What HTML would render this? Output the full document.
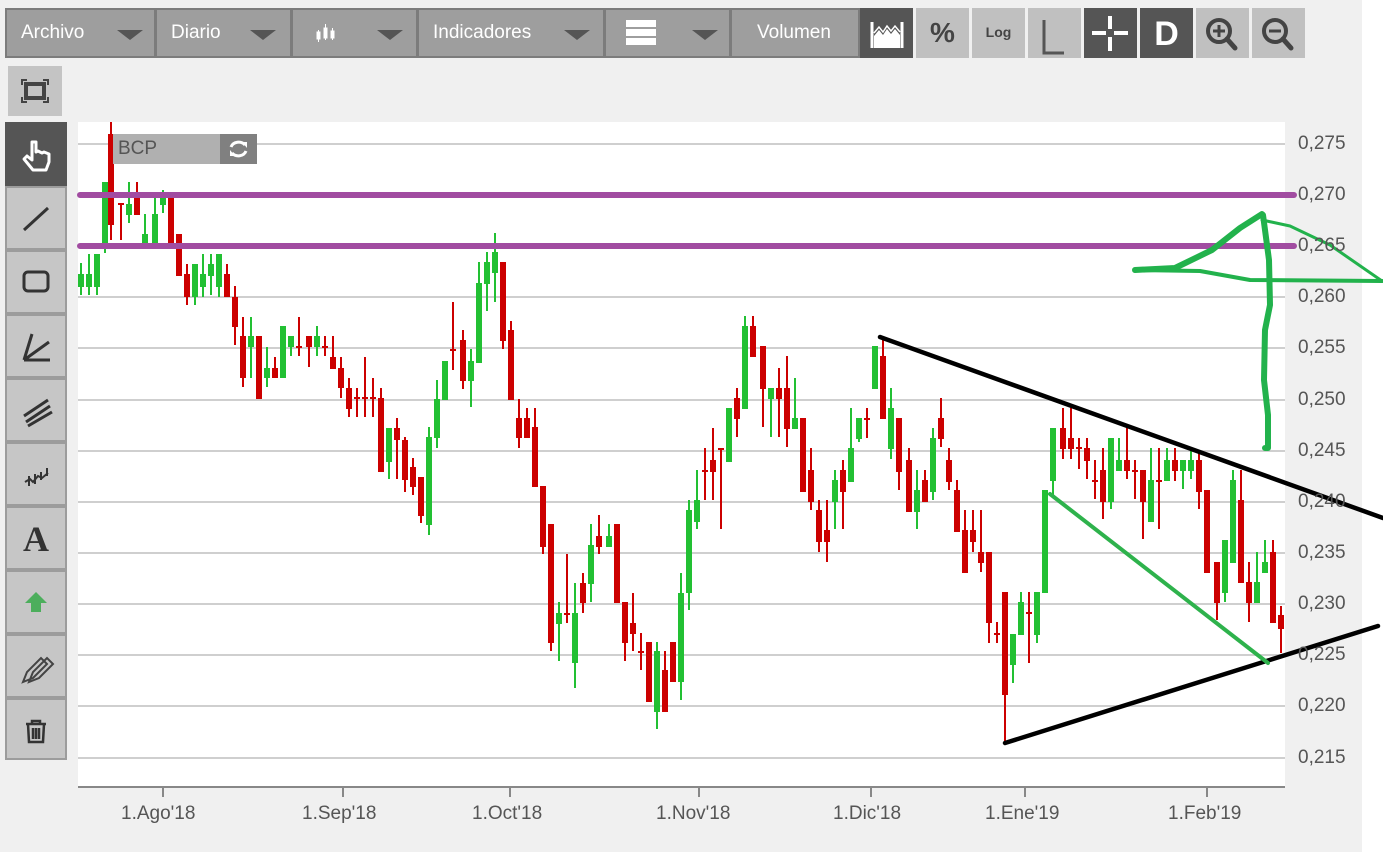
<!DOCTYPE html>
<html><head><meta charset="utf-8"><style>
body{margin:0;width:1383px;height:852px;background:#f0f0f0;font-family:"Liberation Sans",Arial,sans-serif;position:relative;overflow:hidden}
.tb{position:absolute;top:8px;height:50px;background:#9e9e9e;border:2px solid #7c7c7c;box-sizing:border-box;color:#fff;font-size:19px;line-height:46px}
.tb span{position:absolute;left:14px}
.tri{position:absolute;top:20px;width:0;height:0;border-left:13px solid transparent;border-right:13px solid transparent;border-top:10px solid #555}
.ib{position:absolute;top:8px;width:53px;height:50px;background:#c0c0c0}
.ib.d{background:#555}
.lb{position:absolute;left:5px;width:62px;height:64px;background:#c6c6c6;border:2px solid #9c9c9c;box-sizing:border-box}
.ax{position:absolute;left:1298px;font-size:19px;color:#555}
.xl{position:absolute;top:803px;font-size:19px;color:#555}
</style></head><body>
<div class="tb" style="left:5px;width:151px"><span>Archivo</span><div class="tri" style="left:110px"></div></div>
<div class="tb" style="left:155px;width:137px"><span>Diario</span><div class="tri" style="left:93px"></div></div>
<div class="tb" style="left:291px;width:127px"><svg style="position:absolute;left:22px;top:12px" width="28" height="24"><g fill="#fff" stroke="#fff"><rect x="2" y="10" width="3" height="7"/><line x1="3.5" y1="8" x2="3.5" y2="20"/><rect x="9" y="6" width="3" height="10"/><line x1="10.5" y1="2" x2="10.5" y2="18"/><rect x="16" y="9" width="3" height="7"/><line x1="17.5" y1="6" x2="17.5" y2="18"/></g></svg><div class="tri" style="left:84px"></div></div>
<div class="tb" style="left:417px;width:188px"><span>Indicadores</span><div class="tri" style="left:145px"></div></div>
<div class="tb" style="left:604px;width:127px"><svg style="position:absolute;left:20px;top:10px" width="32" height="28"><rect x="0" y="0" width="30" height="7" fill="#fff"/><rect x="0" y="9" width="30" height="7" fill="#fff"/><rect x="0" y="18" width="30" height="7" fill="#fff"/></svg><div class="tri" style="left:86px"></div></div>
<div class="tb" style="left:730px;width:130px"><span style="left:25px">Volumen</span></div>
<div class="ib d" style="left:860px"><svg width="53" height="50"><g stroke="#fff" stroke-width="3" fill="none"><line x1="12" y1="14" x2="12" y2="40"/><line x1="42" y1="14" x2="42" y2="40"/></g><path d="M14 40V28l5-6 4 5 4-6 4 5 4-5 5 6v13z" fill="#fff"/><path d="M14 25l5-6 4 5 4-6 4 5 4-5 5 6" stroke="#fff" stroke-width="1.5" fill="none"/></svg></div>
<div class="ib" style="left:916px;color:#444;font-size:28px;font-weight:bold;text-align:center;line-height:50px">%</div>
<div class="ib" style="left:972px;color:#444;font-size:14px;font-weight:bold;text-align:center;line-height:48px">Log</div>
<div class="ib" style="left:1028px"><svg width="53" height="50"><path d="M16 12V45H36" stroke="#555" stroke-width="3" fill="none"/></svg></div>
<div class="ib d" style="left:1084px"><svg width="53" height="50"><g stroke="#fff" stroke-width="4"><line x1="26" y1="8" x2="26" y2="21"/><line x1="26" y1="29" x2="26" y2="43"/><line x1="8" y1="25" x2="22" y2="25"/><line x1="30" y1="25" x2="44" y2="25"/></g></svg></div>
<div class="ib d" style="left:1140px;color:#fff;font-size:34px;font-weight:bold;text-align:center;line-height:52px">D</div>
<div class="ib" style="left:1196px"><svg width="53" height="50"><circle cx="23" cy="23" r="11" stroke="#444" stroke-width="4" fill="none"/><line x1="31" y1="31" x2="39" y2="40" stroke="#444" stroke-width="5" stroke-linecap="round"/><path d="M17 23h12M23 17v12" stroke="#444" stroke-width="3"/></svg></div>
<div class="ib" style="left:1252px"><svg width="53" height="50"><circle cx="23" cy="23" r="11" stroke="#444" stroke-width="4" fill="none"/><line x1="31" y1="31" x2="39" y2="40" stroke="#444" stroke-width="5" stroke-linecap="round"/><path d="M17 23h12" stroke="#444" stroke-width="3"/></svg></div>

<div style="position:absolute;left:8px;top:66px;width:54px;height:50px;background:#c4c4c4"><svg width="54" height="50"><path d="M14 19v-5h5M35 14h5v5M40 31v5h-5M19 36h-5v-5" stroke="#444" stroke-width="2" fill="none"/><rect x="18" y="18" width="18" height="14" stroke="#444" stroke-width="4" fill="none"/></svg></div>

<div style="position:absolute;left:78px;top:122px;width:1207px;height:664px;background:#fff"></div>

<div class="lb" style="top:122px;background:#555;border-color:#555"><svg width="58" height="60"><path d="M25 18v18l-5-4-3 3 9 11h13l3-8v-8l-5-2-2 1-4-2-2 1V18z" stroke="#fff" stroke-width="3" fill="none" stroke-linejoin="round"/></svg></div>
<div class="lb" style="top:186px"><svg width="58" height="60"><line x1="17" y1="42" x2="41" y2="20" stroke="#333" stroke-width="3"/></svg></div>
<div class="lb" style="top:250px"><svg width="58" height="60"><rect x="17" y="20" width="24" height="19" rx="4" stroke="#333" stroke-width="3" fill="none"/></svg></div>
<div class="lb" style="top:314px"><svg width="58" height="60"><path d="M17 44H43M17 44L42 26M17 44L25 18" stroke="#333" stroke-width="3" fill="none"/></svg></div>
<div class="lb" style="top:378px"><svg width="58" height="60"><path d="M17 36L41 20M19 42L43 26M21 46L45 32" stroke="#333" stroke-width="3"/></svg></div>
<div class="lb" style="top:442px"><svg width="58" height="60"><path d="M18 38l5-3 3 3 5-6 4 2 6-5M22 32v10M28 30v10M34 28v8M40 24v8" stroke="#333" stroke-width="2" fill="none"/></svg></div>
<div class="lb" style="top:506px;font-family:'Liberation Serif',serif;font-weight:bold;font-size:36px;color:#333;text-align:center;line-height:62px">A</div>
<div class="lb" style="top:570px"><svg width="58" height="60"><path d="M29 20L40 31H34V40H24V31H18Z" fill="#4cae5c"/></svg></div>
<div class="lb" style="top:634px"><svg width="58" height="60"><path d="M16 46l4-10 14-14 6 6-14 14zM22 46l4-10 14-14 6 6-14 14z" stroke="#444" stroke-width="2" fill="none"/></svg></div>
<div class="lb" style="top:698px;height:62px"><svg width="58" height="60"><path d="M19 24h20M25 24v-3h8v3M21 24l1 18h14l1-18M26 28v11M29 28v11M32 28v11" stroke="#333" stroke-width="2.5" fill="none"/></svg></div>

<div style="position:absolute;left:1362px;top:0;width:21px;height:852px;background:#fff"></div>

<svg style="position:absolute;left:0;top:0" width="1383" height="852">
<g stroke="#cfcfcf" stroke-width="2"><path d="M78 144H1285M78 195H1285M78 246H1285M78 297H1285M78 348H1285M78 400H1285M78 451H1285M78 502H1285M78 553H1285M78 604H1285M78 655H1285M78 706H1285M78 758H1285"/></g>
<path d="M78 787H1285" stroke="#888" stroke-width="2"/>
<g stroke="#888" stroke-width="2"><path d="M163 787v10M343 787v10M510 787v10M699 787v10M871 787v10M1025 787v10M1207 787v10"/></g>
<g stroke="#22c033" fill="none">
<path stroke-width="2" d="M81 263V295M89 254V295M97 254V295M105 182V253M129 182V223M145 214V243M155 198V243M163 190V213M195 264V305M203 254V297M211 254V295M219 254V297M251 317V378M267 347V387M283 326V378M291 336V356M317 326V356M389 428V479M429 427V535M437 380V448M445 361V400M471 349V407M479 262V363M487 252V311M495 233V302M559 602V661M575 583V688M591 524V602M609 524V547M657 642V729M681 573V700M689 500V610M697 470V529M729 408V462M745 316V409M771 388V437M795 378V429M835 470V529M851 408V482M859 418V442M875 346V389M891 388V459M917 470V529M933 428V500M1013 634V683M1021 592V635M1037 592V643M1045 490V593M1053 428V495M1111 438V509M1119 438V471M1151 448V522M1167 448V481M1183 460V489M1191 448V479M1225 540V602M1233 470V563M1257 552V603M1265 540V573"/>
<path stroke-width="6" d="M81 274V287M89 274V287M97 254V287M105 182V243M129 204V215M145 234V243M155 214V243M163 198V205M195 264V297M203 274V287M211 264V276M219 254V287M251 336V347M267 368V378M283 326V378M291 336V347M317 336V347M389 428V462M429 437V525M437 399V438M445 361V400M471 361V381M479 283V363M487 262V284M495 252V273M559 613V624M575 613V663M591 545V584M609 536V547M657 651V712M681 593V682M689 510V593M697 500V522M729 408V462M745 326V409M771 388V399M795 418V429M835 480V502M851 448V482M859 418V439M875 346V389M891 408V449M917 490V512M933 438V492M1013 634V665M1021 602V635M1037 592V635M1045 490V593M1053 428V481M1111 438V502M1119 460V471M1151 480V522M1167 460V481M1183 460V471M1191 460V471M1225 540V593M1233 480V563M1257 582V603M1265 562V573"/>
</g>
<g stroke="#cc0000" fill="none">
<path stroke-width="2" d="M111 122V240M121 204V240M137 182V215M171 198V243M179 234V276M187 264V305M227 264V297M235 286V345M243 317V387M259 336V399M275 357V378M299 317V356M309 336V367M325 336V356M333 336V369M341 357V398M349 378V417M357 388V417M365 357V417M373 378V417M381 388V472M397 418V479M405 437V492M413 458V495M421 477V523M453 302V370M463 330V389M503 262V349M511 321V400M519 399V448M527 408V438M535 408V487M543 486V554M551 524V651M567 554V623M583 573V613M599 515V554M617 524V603M625 602V661M633 593V651M641 633V670M649 642V702M665 651V712M673 642V682M705 448V500M713 428V500M721 448V529M737 388V437M753 316V357M763 346V427M779 368V437M787 356V447M803 418V492M811 448V510M819 500V552M827 500V562M843 460V529M867 408V438M883 336V419M899 418V490M909 448V512M925 470V502M941 398V447M949 448V490M957 480V532M965 510V573M973 510V552M981 510V572M989 552V643M997 622V643M1005 592V743M1029 592V663M1063 408V459M1071 408V459M1079 438V469M1087 438V479M1095 460V499M1103 448V519M1127 428V479M1135 460V499M1143 470V539M1159 448V529M1175 448V481M1199 452V509M1207 490V573M1217 562V620M1241 470V583M1249 562V622M1273 540V623M1281 606V653"/>
<path stroke-width="6" d="M111 134V225M121 203V205M137 198V215M171 198V243M179 234V276M187 274V297M227 274V297M235 297V327M243 336V378M259 336V399M275 368V378M299 346V348M309 336V347M325 346V348M333 357V369M341 368V388M349 388V409M357 397V399M365 397V399M373 397V399M381 398V472M397 428V440M405 440V480M413 467V487M421 477V516M453 349V351M463 340V381M503 262V341M511 330V400M519 418V438M527 418V438M535 427V487M543 486V547M551 524V643M567 613V615M583 583V603M599 536V547M617 524V603M625 602V643M633 623V634M641 651V653M649 642V702M665 670V712M673 642V682M705 470V472M713 460V472M721 448V450M737 398V419M753 326V357M763 346V389M779 388V399M787 388V429M803 418V492M811 470V502M819 510V542M827 530V542M843 470V492M867 418V420M883 356V419M899 418V472M909 460V512M925 480V502M941 418V439M949 460V482M957 490V532M965 530V573M973 530V542M981 552V563M989 552V623M997 633V635M1005 592V695M1029 612V614M1063 428V449M1071 438V449M1079 447V449M1087 448V461M1095 480V482M1103 470V502M1127 460V471M1135 470V472M1143 470V502M1159 480V482M1175 460V471M1199 460V492M1207 490V573M1217 562V603M1241 500V583M1249 582V603M1273 552V623M1281 615V629"/>
</g>
<g stroke="#a14ca1" stroke-width="6" stroke-linecap="round"><path d="M80 195H1294M80 246H1294"/></g>
<g stroke="#000" stroke-width="4.5" stroke-linecap="round"><path d="M880 337L1383 518M1005 743L1378 626"/></g>
<path d="M1050 494L1268 663" stroke="#2eb24c" stroke-width="4" stroke-linecap="round"/>
<g stroke="#22b24c" fill="none" stroke-linecap="round" stroke-linejoin="round">
<path stroke-width="6" d="M1135 270L1175 268L1212 250L1240 228L1262 214"/>
<path stroke-width="3" d="M1262 220L1290 226L1330 245L1382 281"/>
<path stroke-width="4" d="M1135 270L1200 271L1250 280L1382 281"/>
<path stroke-width="6" d="M1263 215L1269 260L1270 305L1265 330L1264 380L1268 415L1268 448L1265 448"/>
</g>
</svg>

<div style="position:absolute;left:113px;top:134px;width:107px;height:30px;background:#b0b0b0;color:#555;font-size:19px;line-height:30px;padding-left:5px;box-sizing:border-box">BCP</div>
<div style="position:absolute;left:220px;top:134px;width:37px;height:30px;background:#808080"><svg width="37" height="30"><path d="M11 13a8 7 0 0 1 14-2M26 17a8 7 0 0 1-14 2" stroke="#fff" stroke-width="3" fill="none"/><path d="M22 8l5 0 0 6zM15 22l-5 0 0-6z" fill="#fff"/></svg></div>

<div class="ax" style="top:133px">0,275</div><div class="ax" style="top:184px">0,270</div><div class="ax" style="top:235px">0,265</div><div class="ax" style="top:286px">0,260</div><div class="ax" style="top:337px">0,255</div><div class="ax" style="top:389px">0,250</div><div class="ax" style="top:440px">0,245</div><div class="ax" style="top:491px">0,240</div><div class="ax" style="top:542px">0,235</div><div class="ax" style="top:593px">0,230</div><div class="ax" style="top:644px">0,225</div><div class="ax" style="top:695px">0,220</div><div class="ax" style="top:747px">0,215</div>
<div class="xl" style="left:121px">1.Ago'18</div><div class="xl" style="left:302px">1.Sep'18</div><div class="xl" style="left:472px">1.Oct'18</div><div class="xl" style="left:656px">1.Nov'18</div><div class="xl" style="left:833px">1.Dic'18</div><div class="xl" style="left:985px">1.Ene'19</div><div class="xl" style="left:1168px">1.Feb'19</div>
</body></html>
